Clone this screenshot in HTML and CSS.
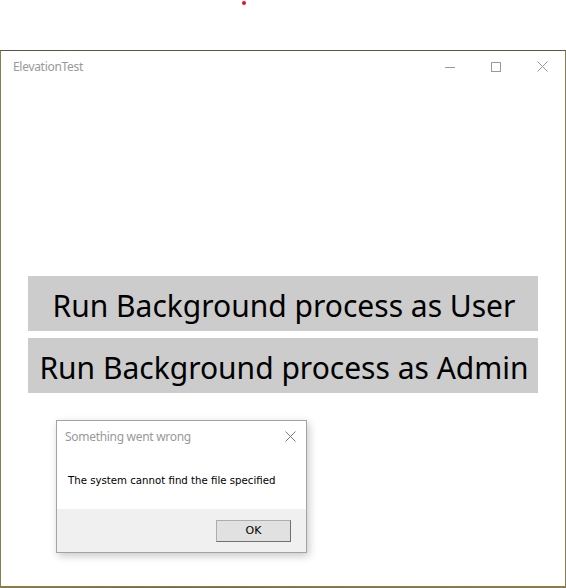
FILE: index.html
```html
<!DOCTYPE html>
<html>
<head>
<meta charset="utf-8">
<link rel="stylesheet" href="styles.css">
</head>
<body>
<div class="desktop">
  <div class="topstrip"><span class="reddot"></span></div>
  <div class="window">
    <div class="titlebar">
      <span class="title">ElevationTest</span>
      <div class="controls">
        <span class="ctl"><svg width="10" height="10" viewBox="0 0 10 10"><path d="M0 5.5H10" stroke="#999" stroke-width="1"/></svg></span>
        <span class="ctl"><svg width="10" height="10" viewBox="0 0 10 10"><rect x="0.5" y="0.5" width="9" height="9" fill="none" stroke="#999" stroke-width="1"/></svg></span>
        <span class="ctl"><svg width="11" height="11" viewBox="0 0 11 11"><path d="M0.5 0.5L10.5 10.5M10.5 0.5L0.5 10.5" stroke="#999" stroke-width="1"/></svg></span>
      </div>
    </div>
    <div class="content">
      <div class="btn">Run Background process as User</div>
      <div class="btn">Run Background process as Admin</div>
    </div>
    <div class="dialog">
      <div class="dlg-title">
        <span>Something went wrong</span>
        <svg width="11" height="11" viewBox="0 0 11 11"><path d="M0.5 0.5L10.5 10.5M10.5 0.5L0.5 10.5" stroke="#777" stroke-width="1"/></svg>
      </div>
      <div class="dlg-msg">The system cannot find the file specified</div>
      <div class="dlg-foot"><span class="ok">OK</span></div>
    </div>
  </div>
  <div class="wallpaper"></div>
</div>
</body>
</html>
```
FILE: styles.css
```css
html, body {
  margin: 0;
  padding: 0;
  background: #ffffff;
}
.desktop {
  width: 566px;
  height: 588px;
  display: flex;
  flex-direction: column;
  overflow: hidden;
}
.topstrip {
  height: 50px;
  position: relative;
}
.reddot {
  position: absolute;
  left: 242px;
  top: 1px;
  width: 4px;
  height: 4px;
  border-radius: 50%;
  background: #e8101c;
}
.window {
  position: relative;
  width: 564px;
  height: 535px;
  border: 1px solid #8d7a4e;
  border-top-color: #5a5440;
  background: #fff;
  display: flex;
  flex-direction: column;
}
.wallpaper {
  height: 1px;
  background: linear-gradient(90deg, #8a7a4e, #6f6a48 30%, #7c7450 60%, #8d7a4e);
}
.titlebar {
  height: 31px;
  display: flex;
  align-items: center;
  justify-content: space-between;
}
.title {
  font-family: "Noto Sans", sans-serif;
  font-size: 12px;
  color: #999;
  padding-left: 12px;
  letter-spacing: -0.3px;
}
.controls {
  display: flex;
}
.ctl {
  width: 46px;
  height: 31px;
  display: flex;
  align-items: center;
  justify-content: center;
}
.content {
  padding: 194px 27px 0 27px;
  display: flex;
  flex-direction: column;
  gap: 7px;
}
.btn {
  height: 55px;
  box-sizing: border-box;
  padding-top: 3px;
  padding-left: 2px;
  background: #cccccc;
  color: #000;
  font-family: "Noto Sans", sans-serif;
  font-size: 30px;
  display: flex;
  align-items: center;
  justify-content: center;
}
.dialog {
  position: absolute;
  left: 55px;
  top: 369px;
  width: 249px;
  height: 131px;
  border: 1px solid #a3a3a3;
  background: #fff;
  box-shadow: 2px 3px 8px rgba(0,0,0,0.22);
  display: flex;
  flex-direction: column;
}
.dlg-title {
  height: 30px;
  display: flex;
  align-items: center;
  justify-content: space-between;
  padding: 0 10px 0 8px;
  font-family: "Noto Sans", sans-serif;
  font-size: 12px;
  letter-spacing: -0.3px;
  color: #999;
}
.dlg-msg {
  height: 58px;
  display: flex;
  align-items: center;
  padding-left: 11px;
  font-family: "DejaVu Sans", sans-serif;
  font-size: 10.2px;
  color: #000;
}
.dlg-foot {
  flex: 1;
  background: #f0f0f0;
  display: flex;
  align-items: center;
  justify-content: flex-end;
  padding-right: 15px;
}
.ok {
  width: 73px;
  height: 20px;
  border: 1px solid #adadad;
  border-right-color: #707070;
  border-bottom-color: #707070;
  background: #e1e1e1;
  display: flex;
  align-items: center;
  justify-content: center;
  font-family: "DejaVu Sans", sans-serif;
  font-size: 11px;
  color: #000;
}
```
